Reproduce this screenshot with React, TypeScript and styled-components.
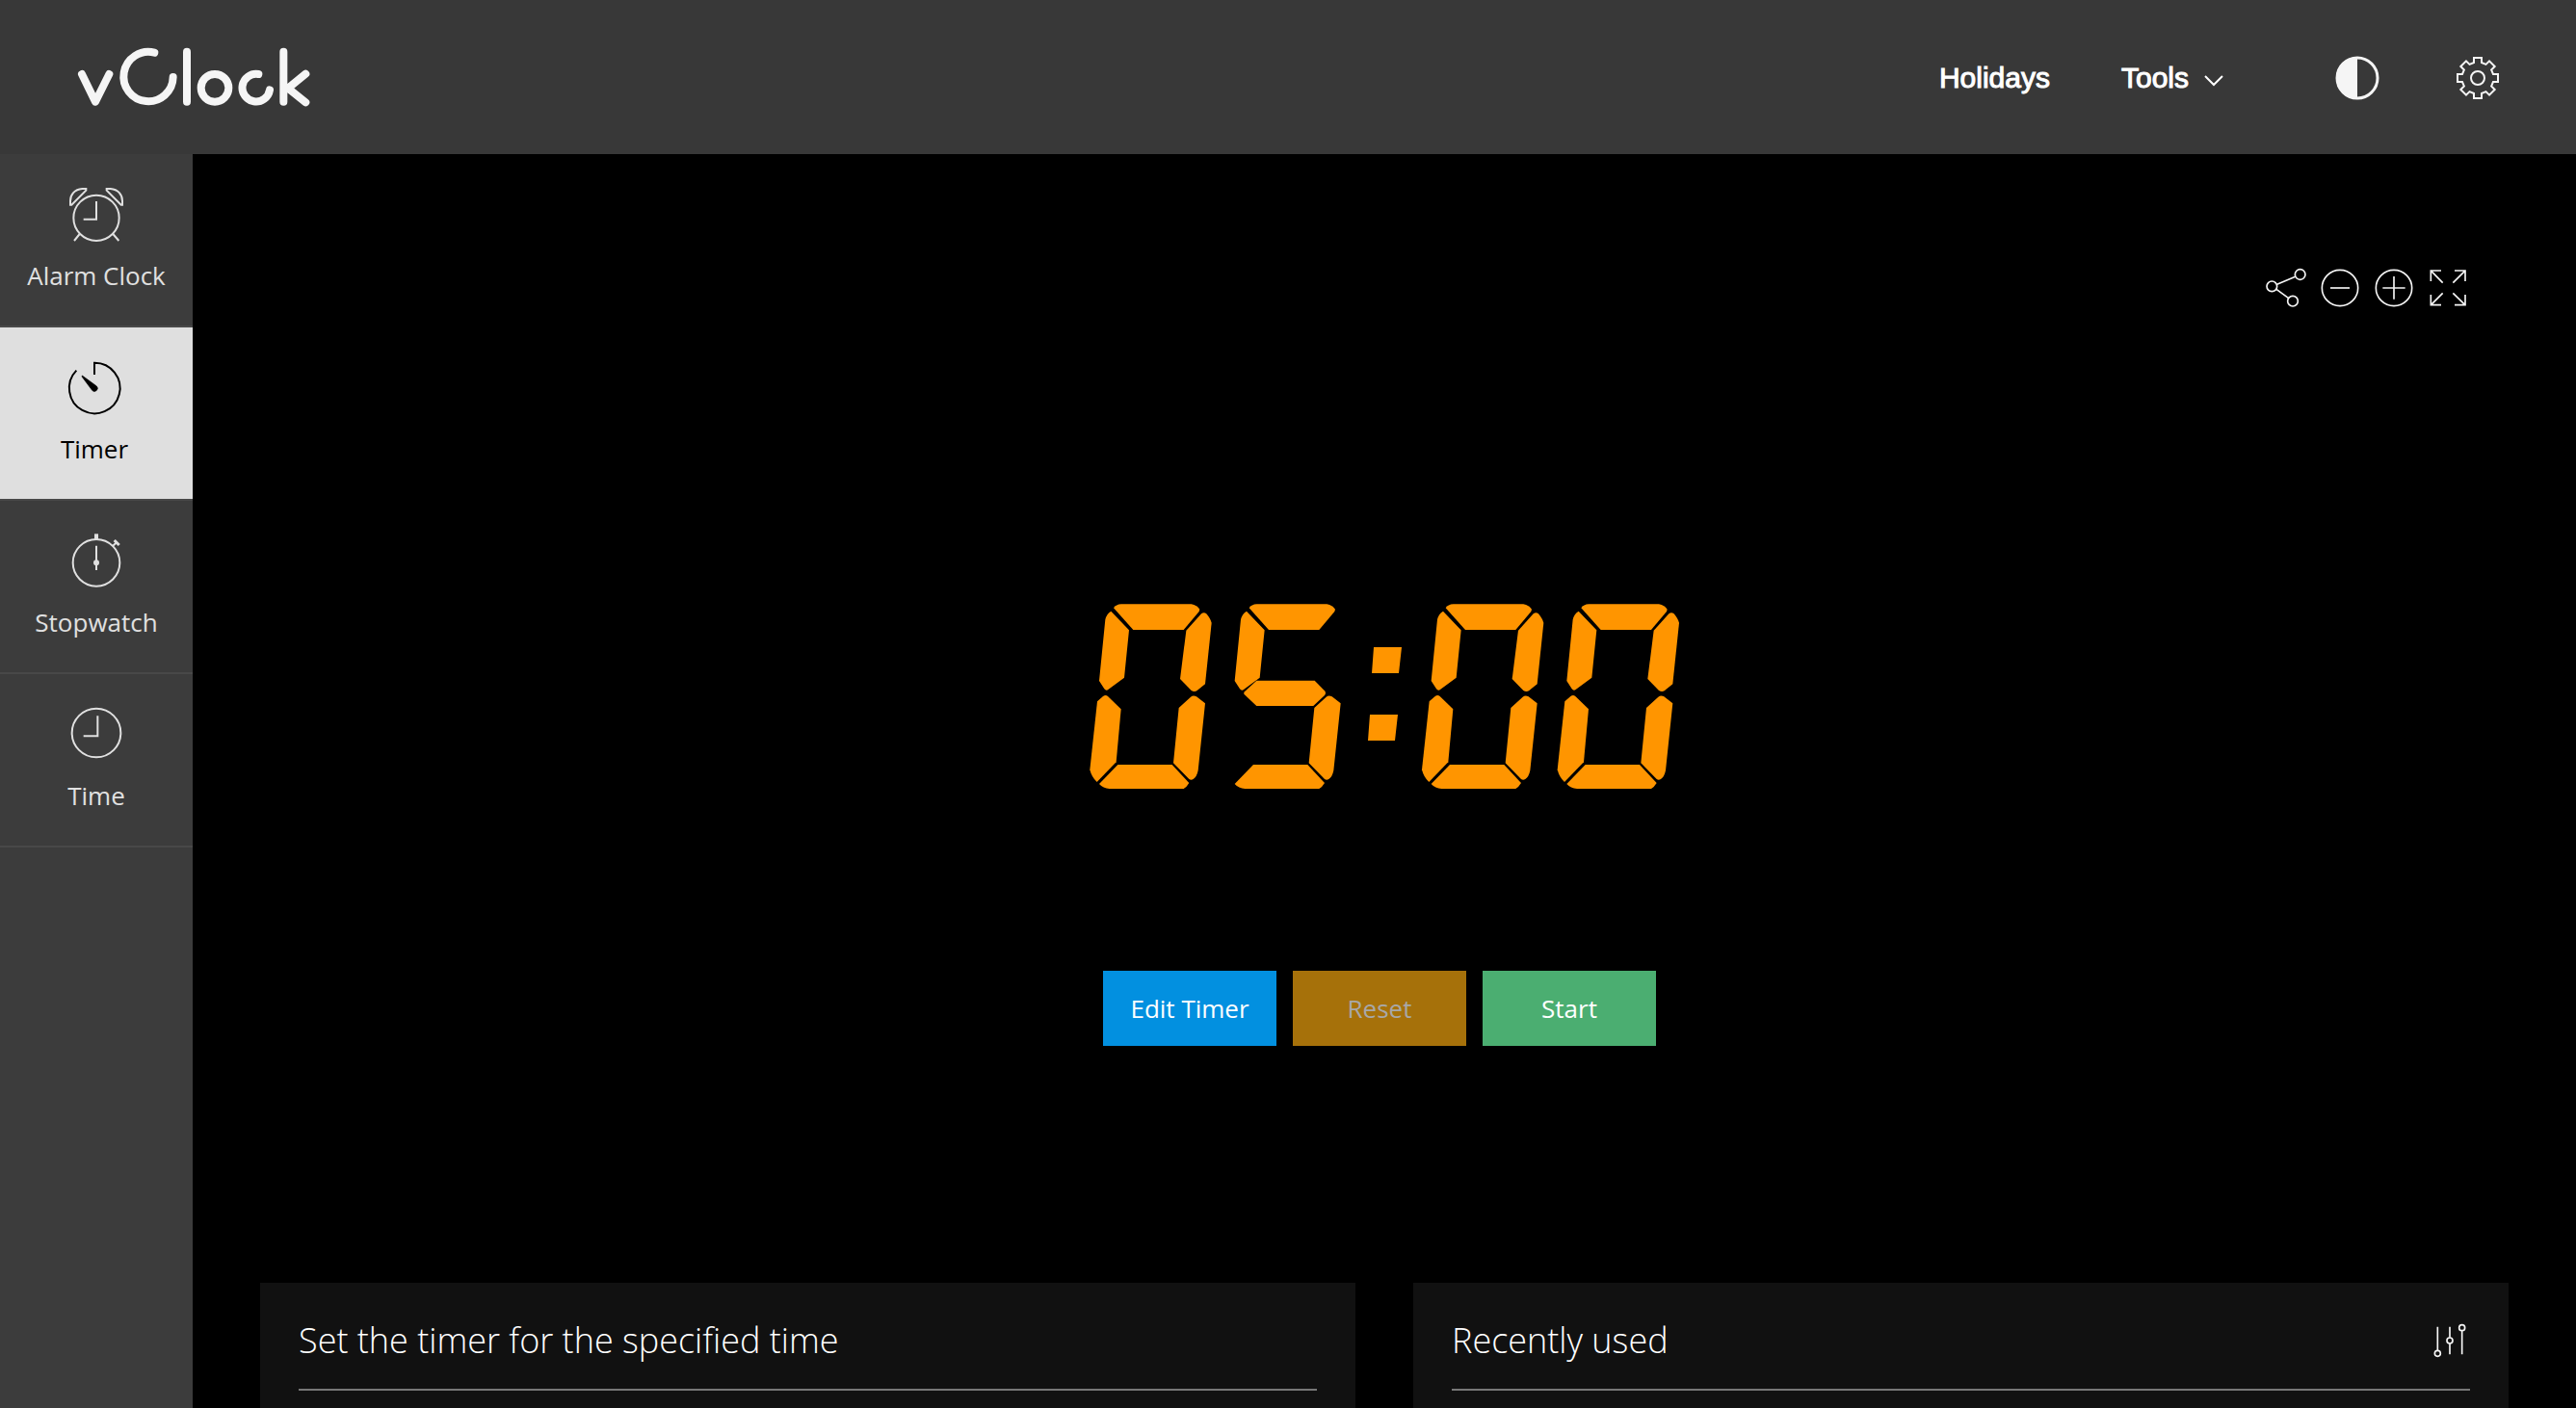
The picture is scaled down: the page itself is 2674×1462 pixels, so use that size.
import React from 'react';
import styled, { createGlobalStyle } from 'styled-components';

const GlobalStyle = createGlobalStyle`
  *, *::before, *::after { box-sizing: border-box; }
  body {
    margin: 0;
    background: #000;
    color: #fff;
    font-family: 'Open Sans', 'Noto Sans', sans-serif;
    font-size: 26px;
    line-height: 36px;
  }
  svg { display: block; overflow: visible; }
  button { font: inherit; color: inherit; border: 0; padding: 0; background: none; cursor: pointer; }
`;

const Page = styled.div`
  min-height: 100vh;
  display: flex;
  flex-direction: column;
`;

const Header = styled.header`
  height: 160px;
  padding: 0 80px;
  display: flex;
  align-items: center;
  justify-content: space-between;
  background: #383838;
`;

const LogoLink = styled.a`
  color: #f5f5f5;
`;

const HeaderNav = styled.nav`
  display: flex;
  align-items: center;
  padding-top: 2px;
`;

const NavLink = styled.a`
  margin-right: 74px;
  color: #fff;
  text-decoration: none;
  font-family: 'Liberation Sans', Arial, sans-serif;
  font-size: 30px;
  -webkit-text-stroke: 1px currentColor;
`;

const NavButton = styled.button`
  display: flex;
  align-items: center;
  gap: 16px;
  margin-right: 116px;

  span {
    font-family: 'Liberation Sans', Arial, sans-serif;
    font-size: 30px;
    -webkit-text-stroke: 1px currentColor;
  }

  svg { margin-top: 6px; }
`;

const HeaderTools = styled.div`
  display: flex;
  align-items: center;
  gap: 80px;
`;

const IconButton = styled.button`
  display: grid;
  place-items: center;
  color: #f5f5f5;
`;

const Body = styled.div`
  flex: 1;
  display: flex;
`;

const Sidebar = styled.nav`
  width: 200px;
  flex-shrink: 0;
  background: #3c3c3c;
`;

const SideLink = styled.a<{ $active?: boolean }>`
  display: flex;
  flex-direction: column;
  align-items: center;
  gap: 17px;
  padding: 35px ${p => (p.$active ? '4px' : '0')} 34px 0;
  border-bottom: 2px solid #484848;
  text-decoration: none;
  color: ${p => (p.$active ? '#000' : '#e0e0e0')};
  background: ${p => (p.$active ? '#dfdfdf' : 'transparent')};
`;

const Main = styled.main`
  flex: 1;
  display: flex;
  flex-direction: column;
  padding: 111px 70px 0;
`;

const Toolbar = styled.div`
  display: flex;
  justify-content: flex-end;
  padding-right: 35px;
`;

const TimerPanel = styled.section`
  display: flex;
  flex-direction: column;
  align-items: center;
  gap: 189px;
  padding: 300px 0 246px;
`;

const Actions = styled.div`
  display: flex;
  gap: 17px;
  padding-right: 10px;
`;

const ActionButton = styled.button<{ $bg: string }>`
  width: 180px;
  height: 78px;
  background: ${p => p.$bg};
  color: #fff;

  &:disabled { color: #a8a8a8; }
`;

const Cards = styled.div`
  flex: 1;
  display: grid;
  grid-template-columns: 1fr 1fr;
  gap: 60px;
`;

const Card = styled.section`
  min-height: 130px;
  padding: 0 40px;
  background: #111;
`;

const CardHead = styled.div`
  height: 112px;
  display: flex;
  align-items: center;
  justify-content: space-between;
  padding-top: 10px;
  border-bottom: 2px solid #777;
`;

const CardTitle = styled.h2`
  margin: 0;
  color: #fff;
  font-size: 36px;
  line-height: 50px;
  font-weight: 300;
`;

const Logo = () => (
  <svg width="242" height="62" viewBox="240 148 726 186" fill="none" stroke="currentColor" strokeWidth="24" strokeLinecap="round" strokeLinejoin="round" aria-hidden="true">
    <path d="M255 232 297 318 340 232" />
    <path d="M481 165A77 77 0 1 0 539 241" />
    <path d="M582 162V318" />
    <circle cx="669" cy="275" r="43" />
    <path d="M805 232A43 43 0 1 0 840 281" />
    <path d="M883 162V318M952 231 897 276 952 320" />
  </svg>
);

/* Lit bars of a slanted seven-segment digit, named a-f clockwise from the top, g in the middle. */
const SEGMENTS: Record<string, string> = {
  a: 'M138 94Q145 83 162 82H380Q398 86 406 98L404 105 356 162H199Z',
  b: 'M364 164 411 112Q419 105 427 112 440 128 443 140L423 331 397 352Q389 357 380 351L345 315Z',
  c: 'M341 405 378 371Q386 364 396 370L423 391 401 600Q397 620 386 627 379 632 373 627L324 577Z',
  d: 'M151 582H320L373 639Q366 651 356 657H125Q105 656 93 642Z',
  e: 'M87 385 105 369Q113 363 120 369L161 409 146 574 86 636Q70 622 64 598Z',
  f: 'M112 130Q116 112 130 104L186 163 171 311 122 347Q115 354 109 346L93 321Z',
  g: 'M583 320H764L795 352Q801 359 795 366L760 399H583L544 362V356Z',
};

const DIGITS: Record<string, string> = {
  '0': 'abcdef',
  '5': 'afgcd',
};

const SegmentDigit = ({ value, x }: { value: string; x: number }) => (
  <g transform={`translate(${x} 0)`}>
    {DIGITS[value].split('').map(s => (
      <path key={s} d={SEGMENTS[s]} transform={s === 'g' ? 'translate(-422 0)' : undefined} />
    ))}
  </g>
);

const SegmentDisplay = () => (
  <svg width="613" height="192" viewBox="63 81 1839 576" fill="#ff9500" role="timer" aria-label="05:00">
    <SegmentDigit value="0" x={0} />
    <SegmentDigit value="5" x={422} />
    <path d="M948 216H1035L1026 297H942ZM936 426H1023L1014 507H930Z" />
    <SegmentDigit value="0" x={1034} />
    <SegmentDigit value="0" x={1456} />
  </svg>
);

const SideIcon = ({ box, children }: { box: string; children: React.ReactNode }) => (
  <svg width="56" height="56" viewBox={box} fill="none" stroke="currentColor" strokeWidth="6" aria-hidden="true">
    {children}
  </svg>
);

const AlarmIcon = () => (
  <SideIcon box="216 105 168 168">
    <circle cx="300" cy="199" r="71" />
    <path d="M268 108H256C232 110 219 126 219 146V158H223L268 113ZM332 108H344C368 110 381 126 381 146V158H377L332 113Z" />
    <path d="M300 147V203H260M248 249 231 270M352 249 370 270" />
  </SideIcon>
);

const TimerIcon = () => (
  <SideIcon box="210 642 168 168">
    <path d="M294 684V647A79 79 0 1 1 238 671" />
    <path d="M256 687 301 720A9 9 0 1 1 287 733L255 690Z" fill="currentColor" strokeWidth="2" />
  </SideIcon>
);

const StopwatchIcon = () => (
  <SideIcon box="216 135 168 168">
    <circle cx="300" cy="223" r="73" />
    <path d="M300 133V150" strokeWidth="12" />
    <path d="M300 170V246M350 172 363 160" />
    <circle cx="300" cy="223" r="9" fill="currentColor" stroke="none" />
    <path d="M356 153 371 168" strokeWidth="9" />
  </SideIcon>
);

const ClockIcon = () => (
  <SideIcon box="216 675 168 168">
    <circle cx="300" cy="753" r="76" />
    <path d="M304 700V763H260" />
  </SideIcon>
);

const ToolIcon = ({ box, children }: { box: string; children: React.ReactNode }) => (
  <svg width="56" height="56" viewBox={box} fill="none" stroke="currentColor" strokeWidth="5" aria-hidden="true">
    {children}
  </svg>
);

const GearIcon = () => {
  const points: string[] = [];
  for (let i = 0; i < 8; i++) {
    const base = (i * Math.PI) / 4;
    const at = (along: number, side: number) => {
      const x = along * Math.sin(base) + side * Math.cos(base);
      const y = -along * Math.cos(base) + side * Math.sin(base);
      points.push(`${x.toFixed(2)},${y.toFixed(2)}`);
    };
    at(16, -4);
    at(21, -4);
    at(21, 4);
    at(16, 4);
  }
  return (
    <svg width="44" height="44" viewBox="-22 -22 44 44" fill="none" stroke="currentColor" strokeWidth="2" aria-hidden="true">
      <polygon points={points.join(' ')} />
      <circle r="7" />
    </svg>
  );
};

export default function App() {
  return (
    <Page>
      <GlobalStyle />
      <Header>
        <LogoLink href="#" aria-label="vClock"><Logo /></LogoLink>
        <HeaderNav>
          <NavLink href="#holidays">Holidays</NavLink>
          <NavButton type="button">
            <span>Tools</span>
            <svg width="20" height="12" viewBox="0 0 20 12" fill="none" stroke="currentColor" strokeWidth="2" aria-hidden="true">
              <path d="M1 1 10 10 19 1" />
            </svg>
          </NavButton>
          <HeaderTools>
            <IconButton type="button" aria-label="Night mode">
              <svg width="46" height="46" viewBox="0 0 46 46" aria-hidden="true">
                <circle cx="23" cy="23" r="21" fill="none" stroke="currentColor" strokeWidth="3" />
                <path d="M23 1A22 22 0 0 0 23 45Z" fill="currentColor" />
              </svg>
            </IconButton>
            <IconButton type="button" aria-label="Settings"><GearIcon /></IconButton>
          </HeaderTools>
        </HeaderNav>
      </Header>
      <Body>
        <Sidebar>
          <SideLink href="#alarm"><AlarmIcon />Alarm Clock</SideLink>
          <SideLink href="#timer" $active aria-current="page"><TimerIcon />Timer</SideLink>
          <SideLink href="#stopwatch"><StopwatchIcon />Stopwatch</SideLink>
          <SideLink href="#time"><ClockIcon />Time</SideLink>
        </Sidebar>
        <Main>
          <Toolbar>
            <IconButton type="button" aria-label="Share">
              <ToolIcon box="75 63 168 168">
                <circle cx="115" cy="142" r="16" />
                <circle cx="203" cy="105" r="16" />
                <circle cx="180" cy="188" r="16" />
                <path d="M131 136 188 112M129 151 167 179" />
              </ToolIcon>
            </IconButton>
            <IconButton type="button" aria-label="Decrease size">
              <ToolIcon box="243 63 168 168">
                <circle cx="327" cy="147" r="56" />
                <path d="M297 147H357" />
              </ToolIcon>
            </IconButton>
            <IconButton type="button" aria-label="Increase size">
              <ToolIcon box="411 63 168 168">
                <circle cx="495" cy="147" r="56" />
                <path d="M460 147H530M495 111V182" />
              </ToolIcon>
            </IconButton>
            <IconButton type="button" aria-label="Full screen">
              <ToolIcon box="579 63 168 168">
                <path d="M642 93H610V126M611 94 647 131M684 93H717V126M716 94 679 131M642 200H610V168M611 199 647 163M684 200H717V168M716 199 679 163" />
              </ToolIcon>
            </IconButton>
          </Toolbar>
          <TimerPanel>
            <SegmentDisplay />
            <Actions>
              <ActionButton type="button" $bg="#0290e0">Edit Timer</ActionButton>
              <ActionButton type="button" $bg="#a6710a" disabled>Reset</ActionButton>
              <ActionButton type="button" $bg="#4bae71">Start</ActionButton>
            </Actions>
          </TimerPanel>
          <Cards>
            <Card>
              <CardHead>
                <CardTitle>Set the timer for the specified time</CardTitle>
              </CardHead>
            </Card>
            <Card>
              <CardHead>
                <CardTitle>Recently used</CardTitle>
                <IconButton type="button" aria-label="Manage recent timers">
                  <svg width="42" height="42" viewBox="366 185 126 126" fill="none" stroke="currentColor" strokeWidth="5" aria-hidden="true">
                    <path d="M391 205V279M429 205V238M429 257V291M467 217V291" />
                    <circle cx="391" cy="288" r="9" />
                    <circle cx="429" cy="248" r="9" />
                    <circle cx="467" cy="208" r="9" />
                  </svg>
                </IconButton>
              </CardHead>
            </Card>
          </Cards>
        </Main>
      </Body>
    </Page>
  );
}
